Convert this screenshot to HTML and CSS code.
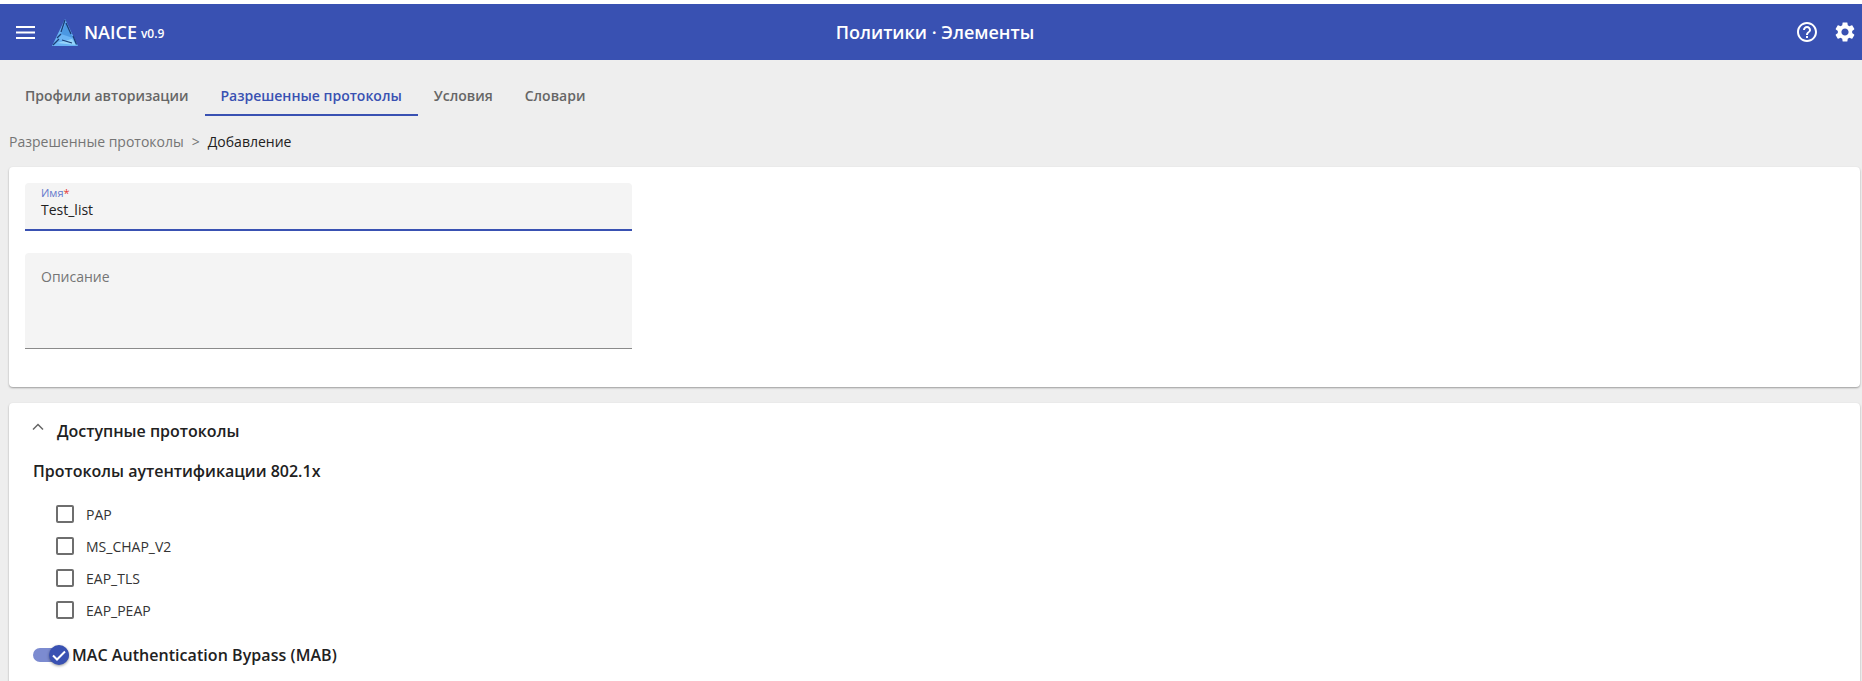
FILE: index.html
```html
<!DOCTYPE html>
<html lang="ru">
<head>
<meta charset="utf-8">
<title>NAICE</title>
<link rel="stylesheet" href="styles.css">
</head>
<body>
<header class="topbar">
  <div class="brand">
    <svg class="menu" viewBox="0 0 19 13" width="19" height="13"><path d="M0 1h19M0 6.5h19M0 12h19" stroke="#fff" stroke-width="2" fill="none"/></svg>
    <svg class="logo" viewBox="0 0 26 27" width="26" height="27">
      <polygon points="13,0 26,27 0,27" fill="#6ab4f4"/>
      <polygon points="14,3 21,19 9,15" fill="#4b98e2"/>
      <polygon points="5,24 20,20 24,26" fill="#95d4fa"/>
      <path d="M13 1L9 13M14 4L19 15M21 17L24.5 25.5M10 21L20 24M1 26L7 20M9 15L5 19" stroke="#1b3d75" stroke-width="1.3" fill="none"/>
    </svg>
    <span class="name">NAICE</span><span class="ver">v0.9</span>
  </div>
  <div class="title">Политики · Элементы</div>
  <div class="actions">
    <svg viewBox="0 0 24 24" width="24" height="24"><path fill="#fff" d="M11 18h2v-2h-2v2zm1-16C6.48 2 2 6.48 2 12s4.48 10 10 10 10-4.48 10-10S17.52 2 12 2zm0 18c-4.41 0-8-3.59-8-8s3.59-8 8-8 8 3.59 8 8-3.59 8-8 8zm0-14c-2.21 0-4 1.79-4 4h2c0-1.1.9-2 2-2s2 .9 2 2c0 2-3 1.75-3 5h2c0-2.25 3-2.5 3-5 0-2.21-1.79-4-4-4z"/></svg>
    <svg viewBox="0 0 24 24" width="24" height="24"><path fill="#fff" d="M19.14 12.94c.04-.3.06-.61.06-.94 0-.32-.02-.64-.07-.94l2.03-1.58c.18-.14.23-.41.12-.61l-1.92-3.32c-.12-.22-.37-.29-.59-.22l-2.39.96c-.5-.38-1.03-.7-1.62-.94l-.36-2.54c-.04-.24-.24-.41-.48-.41h-3.84c-.24 0-.43.17-.47.41l-.36 2.54c-.59.24-1.13.57-1.62.94l-2.39-.96c-.22-.08-.47 0-.59.22L2.74 8.87c-.12.21-.08.47.12.61l2.03 1.58c-.05.3-.09.63-.09.94s.02.64.07.94l-2.03 1.58c-.18.14-.23.41-.12.61l1.92 3.32c.12.22.37.29.59.22l2.39-.96c.5.38 1.03.7 1.62.94l.36 2.54c.05.24.24.41.48.41h3.84c.24 0 .44-.17.47-.41l.36-2.54c.59-.24 1.13-.56 1.62-.94l2.39.96c.22.08.47 0 .59-.22l1.92-3.32c.12-.22.07-.47-.12-.61l-2.01-1.58zM12 15.6c-1.98 0-3.6-1.62-3.6-3.6s1.62-3.6 3.6-3.6 3.6 1.62 3.6 3.6-1.62 3.6-3.6 3.6z"/></svg>
  </div>
</header>
<nav class="tabs">
  <a class="tab">Профили авторизации</a>
  <a class="tab active">Разрешенные протоколы</a>
  <a class="tab">Условия</a>
  <a class="tab">Словари</a>
</nav>
<div class="crumbs"><span class="crumb-link">Разрешенные протоколы</span><span class="sep">&gt;</span><span class="crumb-cur">Добавление</span></div>
<main class="content">
  <section class="card form-card">
    <div class="field name-field">
      <label class="float-label">Имя<span class="req">*</span></label>
      <div class="value">Test_list</div>
    </div>
    <div class="field desc-field">
      <div class="placeholder">Описание</div>
    </div>
  </section>
  <section class="card proto-card">
    <div class="acc-head">
      <svg class="chevron" viewBox="0 0 12 8" width="12" height="8"><path d="M1 6.5L6 1.5l5 5" stroke="#666" stroke-width="1.5" fill="none"/></svg>
      <span>Доступные протоколы</span>
    </div>
    <h3 class="group-title">Протоколы аутентификации 802.1x</h3>
    <ul class="checks">
      <li class="check"><span class="box"></span>PAP</li>
      <li class="check"><span class="box"></span>MS_CHAP_V2</li>
      <li class="check"><span class="box"></span>EAP_TLS</li>
      <li class="check"><span class="box"></span>EAP_PEAP</li>
    </ul>
    <div class="toggle-row">
      <span class="toggle"><span class="knob"><svg viewBox="0 0 14 11" width="14" height="11"><path d="M1 5.5l4 4L13 1.5" stroke="#fff" stroke-width="2" fill="none"/></svg></span></span>
      <span class="toggle-label">MAC Authentication Bypass (MAB)</span>
    </div>
  </section>
</main>
</body>
</html>
```

FILE: styles.css
```css
* { box-sizing: border-box; }
html, body { height: 100%; }
body {
  margin: 0;
  padding-top: 4px;
  height: 681px;
  overflow: hidden;
  background: linear-gradient(#fff 4px, #eee 4px);
  font-family: "Open Sans", "Noto Sans", sans-serif;
  color: #212121;
}
.topbar {
  height: 56px;
  background: #3951b2;
  color: #fff;
  display: grid;
  grid-template-columns: 1fr auto 1fr;
  align-items: center;
  padding: 0 8px 0 16px;
}
.brand { display: flex; align-items: center; }
.menu { margin-right: 17px; }
.logo { margin-right: 6px; margin-top: 1px; }
.name { font-size: 18px; font-weight: 600; }
.ver { font-size: 12px; font-weight: 600; margin-left: 4px; margin-top: 3px; }
.title { font-size: 18px; font-weight: 600; }
.actions { display: flex; justify-content: flex-end; gap: 14px; margin-right: -3px; }
.tabs { display: flex; padding: 15px 9px 0; height: 56px; }
.tab {
  padding: 0 16px;
  height: 41px;
  display: flex;
  align-items: center;
  font-size: 14px;
  font-weight: 600;
  color: #666;
}
.tab.active { color: #3951b2; border-bottom: 2px solid #3951b2; padding-top: 2px; }
.crumbs { display: flex; height: 51px; padding: 16px 9px 0; font-size: 14px; line-height: 20px; }
.crumb-link { color: #757575; }
.sep { color: #757575; margin: 0 8px; }
.crumb-cur { color: #212121; }
.content { padding: 0 2px 0 9px; }
.card {
  background: #fff;
  border-radius: 4px;
  box-shadow: 0 1px 2px rgba(0,0,0,.35);
}
.form-card { height: 220px; padding: 16px 16px; margin-bottom: 16px; }
.field { width: 607px; background: #f4f4f4; border-radius: 4px 4px 0 0; padding: 0 16px; }
.name-field { height: 48px; border-bottom: 2px solid #3951b2; margin-bottom: 22px; padding-top: 3px; }
.float-label { display: block; font-size: 11px; line-height: 13px; color: #6478cc; }
.req { color: #e53935; }
.value { font-size: 14px; line-height: 22px; color: #212121; }
.desc-field { height: 96px; border-bottom: 1px solid #8a8a8a; padding-top: 14px; }
.placeholder { font-size: 14px; line-height: 20px; color: #757575; }
.proto-card { height: 300px; padding: 0 24px; }
.acc-head { display: flex; align-items: center; gap: 13px; height: 54px; padding-top: 2px; font-size: 16px; font-weight: 600; color: #212121; margin-left: -1px; }
.chevron { margin-top: -9px; }
.group-title { margin: 0; font-size: 16px; line-height: 24px; font-weight: 600; color: #212121; padding-top: 2px; }
.checks { list-style: none; margin: 15px 0 0; padding: 0 0 0 23px; }
.check { display: flex; align-items: center; height: 32px; font-size: 14px; color: #333; }
.box { width: 18px; height: 18px; border: 2px solid #6e6e6e; border-radius: 2px; margin-right: 12px; }
.toggle-row { display: flex; align-items: center; margin-top: 17px; height: 24px; }
.toggle { position: relative; display: block; width: 36px; height: 14px; border-radius: 7px; background: #7c8bd0; margin-right: 3px; }
.knob {
  position: absolute;
  right: 0;
  top: -3px;
  width: 20px;
  height: 20px;
  border-radius: 50%;
  background: #3951b2;
  box-shadow: 0 1px 3px rgba(0,0,0,.4);
  display: flex;
  align-items: center;
  justify-content: center;
}
.toggle-label { font-size: 16px; font-weight: 600; color: #212121; letter-spacing: .05px; }
```
